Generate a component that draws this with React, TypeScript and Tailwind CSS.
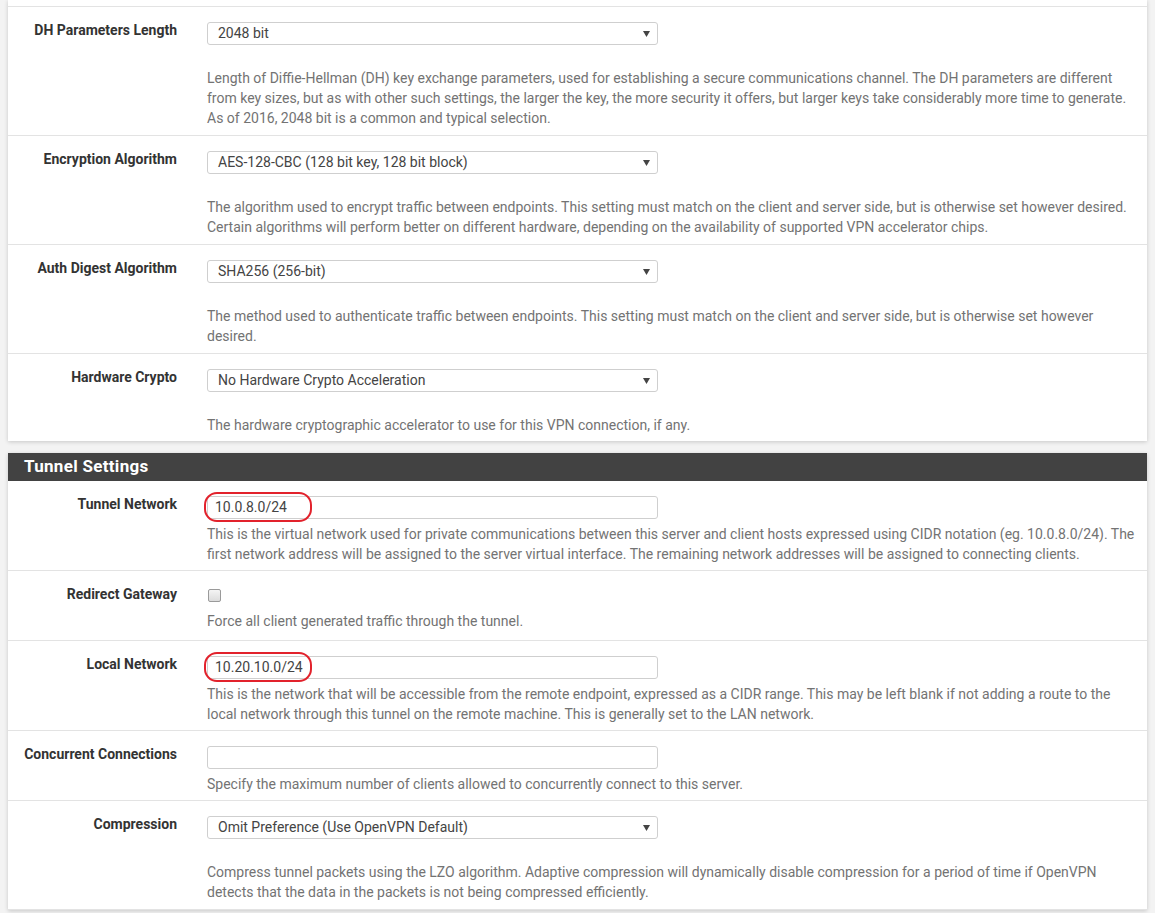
import React from 'react'

type Field =
  | { kind: 'select'; label: string; value: string; help: string[] }
  | { kind: 'input'; label: string; value: string; help: string[]; marked?: boolean }
  | { kind: 'checkbox'; label: string; help: string[] }

const cryptoFields: Field[] = [
  {
    kind: 'select',
    label: 'DH Parameters Length',
    value: '2048 bit',
    help: [
      'Length of Diffie-Hellman (DH) key exchange parameters, used for establishing a secure communications channel. The DH parameters are different from key sizes, but as with other such settings, the larger the key, the more security it offers, but larger keys take considerably more time to generate. As of 2016, 2048 bit is a common and typical selection.',
    ],
  },
  {
    kind: 'select',
    label: 'Encryption Algorithm',
    value: 'AES-128-CBC (128 bit key, 128 bit block)',
    help: [
      'The algorithm used to encrypt traffic between endpoints. This setting must match on the client and server side, but is otherwise set however desired. Certain algorithms will perform better on different hardware, depending on the availability of supported VPN accelerator chips.',
    ],
  },
  {
    kind: 'select',
    label: 'Auth Digest Algorithm',
    value: 'SHA256 (256-bit)',
    help: [
      'The method used to authenticate traffic between endpoints. This setting must match on the client and server side, but is otherwise set however desired.',
    ],
  },
  {
    kind: 'select',
    label: 'Hardware Crypto',
    value: 'No Hardware Crypto Acceleration',
    help: ['The hardware cryptographic accelerator to use for this VPN connection, if any.'],
  },
]

const tunnelFields: Field[] = [
  {
    kind: 'input',
    label: 'Tunnel Network',
    value: '10.0.8.0/24',
    marked: true,
    help: [
      'This is the virtual network used for private communications between this server and client hosts expressed using CIDR notation (eg. 10.0.8.0/24). The first network address will be assigned to the server virtual interface. The remaining network addresses will be assigned to connecting clients.',
    ],
  },
  {
    kind: 'checkbox',
    label: 'Redirect Gateway',
    help: ['Force all client generated traffic through the tunnel.'],
  },
  {
    kind: 'input',
    label: 'Local Network',
    value: '10.20.10.0/24',
    marked: true,
    help: [
      'This is the network that will be accessible from the remote endpoint, expressed as a CIDR range. This may be left blank if not adding a route to the local network through this tunnel on the remote machine. This is generally set to the LAN network.',
    ],
  },
  {
    kind: 'input',
    label: 'Concurrent Connections',
    value: '',
    help: ['Specify the maximum number of clients allowed to concurrently connect to this server.'],
  },
  {
    kind: 'select',
    label: 'Compression',
    value: 'Omit Preference (Use OpenVPN Default)',
    help: [
      'Compress tunnel packets using the LZO algorithm. Adaptive compression will dynamically disable compression for a period of time if OpenVPN detects that the data in the packets is not being compressed efficiently.',
    ],
  },
]

function SelectBox({ value }: { value: string }) {
  return (
    <div className="flex h-[23px] w-[451px] items-center justify-between rounded-[3px] border border-[#cfcfcf] bg-white pl-[10px] pr-[7px] text-[14px] text-[#444]">
      <span>{value}</span>
      <svg width="7" height="6" viewBox="0 0 7 6">
        <path d="M0 0 L7 0 L3.5 6 Z" fill="#444" />
      </svg>
    </div>
  )
}

function TextBox({ value, marked }: { value: string; marked?: boolean }) {
  return (
    <div className="relative w-[451px]">
      <div className="flex h-[23px] w-full items-center rounded-[3px] border border-[#cfcfcf] bg-white pl-[7px] text-[14px] text-[#444]">
        {value}
      </div>
      {marked && (
        <div className="pointer-events-none absolute left-[-3px] top-[-4px] h-[30px] w-[108px] rounded-[13px] border-2 border-[#e2222c]" />
      )}
    </div>
  )
}

function FieldRow({ field, last }: { field: Field; last?: boolean }) {
  return (
    <div className={`flex ${last ? '' : 'border-b border-[#e3e3e3]'}`}>
      <div className="w-[184px] shrink-0 pr-[15px] pt-[13px] text-right text-[14px] font-bold leading-5 text-[#333]">
        {field.label}
      </div>
      <div className="flex-1 pl-[15px] pr-[10px]">
        {field.kind === 'select' && (
          <>
            <div className="pt-[15px]">
              <SelectBox value={field.value} />
            </div>
            <p className={`mt-[23px] ${last ? 'pb-[6px]' : 'pb-[7px]'} text-[14px] leading-5 text-[#737373]`}>
              {field.help[0]}
            </p>
          </>
        )}
        {field.kind === 'input' && (
          <>
            <div className="pt-[15px]">
              <TextBox value={field.value} marked={field.marked} />
            </div>
            <p className="mt-[5px] pb-[6px] text-[14px] leading-5 text-[#737373]">{field.help[0]}</p>
          </>
        )}
        {field.kind === 'checkbox' && (
          <>
            <div className="pt-[18px] pl-px">
              <div className="h-[13px] w-[13px] rounded-[2px] border border-[#9a9a9a] bg-gradient-to-b from-[#f4f4f4] to-[#dcdcdc]" />
            </div>
            <p className="mt-[9px] pb-[9px] text-[14px] leading-5 text-[#737373]">{field.help[0]}</p>
          </>
        )}
      </div>
    </div>
  )
}

export default function App() {
  return (
    <div
      className="min-h-[913px] bg-[#f3f3f3] px-2"
      style={{ fontFamily: 'Roboto, "Liberation Sans", sans-serif' }}
    >
      <div className="bg-white shadow-[0_1px_4px_rgba(0,0,0,0.18)]">
        <div className="h-[7px] border-b border-[#e3e3e3]" />
        {cryptoFields.map((f, i) => (
          <FieldRow key={f.label} field={f} last={i === cryptoFields.length - 1} />
        ))}
      </div>

      <div className="mt-[12px] bg-white shadow-[0_1px_4px_rgba(0,0,0,0.18)]">
        <div className="flex h-[28px] items-center bg-[#424242] pl-4 text-[17px] font-bold tracking-[0.3px] text-white">
          Tunnel Settings
        </div>
        {tunnelFields.map((f) => (
          <FieldRow key={f.label} field={f} />
        ))}
      </div>
    </div>
  )
}
